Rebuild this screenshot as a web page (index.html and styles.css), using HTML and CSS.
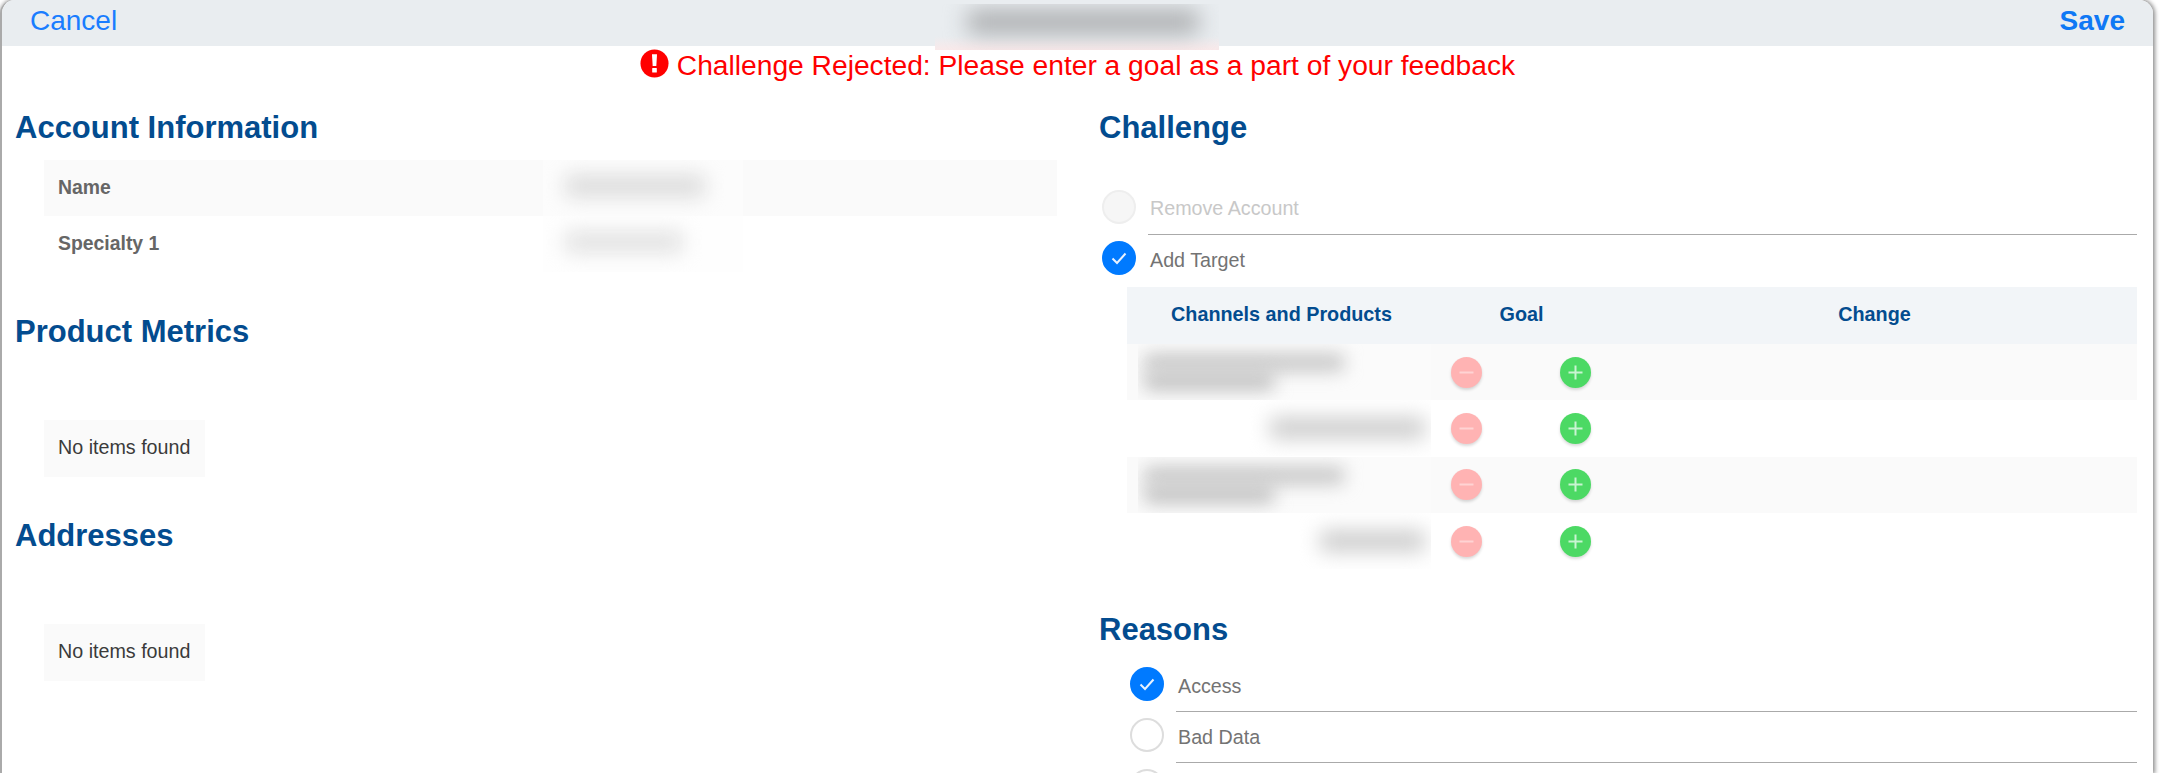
FILE: index.html
```html
<!DOCTYPE html>
<html lang="en">
<head>
  <meta charset="UTF-8" />
  <title>Challenge</title>
  <link rel="stylesheet" href="styles.css">
</head>
<body>
  <div class="modal">
    <div class="modal-header">
      <a class="header-link">Cancel</a>
      <div class="title-patch"><span class="title-smear"></span></div>
      <a class="header-link save">Save</a>
    </div>

    <div class="error-line">
      <svg class="error-icon" viewBox="0 0 30 30">
        <circle cx="15" cy="15" r="14.5" fill="#ff0000"/>
        <path d="M12.4 5.5h5.2l-.7 12h-3.8z" fill="#fff"/>
        <rect x="12.6" y="19.6" width="4.8" height="4.8" rx="0.6" fill="#fff"/>
      </svg>
      <span>Challenge Rejected: Please enter a goal as a part of your feedback</span>
    </div>

    <div class="columns">
      <div class="col">
        <h2 class="section-title">Account Information</h2>
        <table class="info-table">
          <tr class="shaded">
            <th>Name</th>
            <td><div class="smears info-smears"><span class="smear s-name"></span></div></td>
          </tr>
          <tr>
            <th>Specialty 1</th>
            <td><div class="smears info-smears pale"><span class="smear s-spec"></span></div></td>
          </tr>
        </table>

        <h2 class="section-title spaced">Product Metrics</h2>
        <div class="empty-box">No items found</div>

        <h2 class="section-title spaced-more">Addresses</h2>
        <div class="empty-box">No items found</div>
      </div>

      <div class="col">
        <h2 class="section-title">Challenge</h2>
        <div class="challenge-list">
          <div class="radio-row">
            <span class="radio disabled"></span>
            <span class="radio-label muted">Remove Account</span>
          </div>
          <div class="radio-row no-line">
            <span class="radio checked">
              <svg viewBox="0 0 34 34"><path d="M10.5 17.5l4.5 4.5 8.5-9.5" fill="none" stroke="#e8f2ff" stroke-width="2"/></svg>
            </span>
            <span class="radio-label">Add Target</span>
          </div>
        </div>

        <table class="goal-table">
          <thead>
            <tr>
              <th class="c-name">Channels and Products</th>
              <th class="c-goal">Goal</th>
              <th>Change</th>
            </tr>
          </thead>
          <tbody>
            <tr>
              <td class="name-cell"><div class="smears two-line"><span class="smear l1"></span><span class="smear l2"></span></div></td>
              <td><div class="goal-btns">
                <button class="round minus"><svg viewBox="0 0 31 31"><path d="M8.5 15.5h14" stroke="#ffd3d3" stroke-width="2"/></svg></button>
                <button class="round plus"><svg viewBox="0 0 31 31"><path d="M8.5 15.5h14M15.5 8.5v14" stroke="#c9f4d2" stroke-width="2"/></svg></button>
              </div></td>
              <td></td>
            </tr>
            <tr>
              <td class="name-cell"><div class="smears one-line"><span class="smear r-long"></span></div></td>
              <td><div class="goal-btns">
                <button class="round minus"><svg viewBox="0 0 31 31"><path d="M8.5 15.5h14" stroke="#ffd3d3" stroke-width="2"/></svg></button>
                <button class="round plus"><svg viewBox="0 0 31 31"><path d="M8.5 15.5h14M15.5 8.5v14" stroke="#c9f4d2" stroke-width="2"/></svg></button>
              </div></td>
              <td></td>
            </tr>
            <tr>
              <td class="name-cell"><div class="smears two-line"><span class="smear l1"></span><span class="smear l2"></span></div></td>
              <td><div class="goal-btns">
                <button class="round minus"><svg viewBox="0 0 31 31"><path d="M8.5 15.5h14" stroke="#ffd3d3" stroke-width="2"/></svg></button>
                <button class="round plus"><svg viewBox="0 0 31 31"><path d="M8.5 15.5h14M15.5 8.5v14" stroke="#c9f4d2" stroke-width="2"/></svg></button>
              </div></td>
              <td></td>
            </tr>
            <tr>
              <td class="name-cell"><div class="smears one-line"><span class="smear r-short"></span></div></td>
              <td><div class="goal-btns">
                <button class="round minus"><svg viewBox="0 0 31 31"><path d="M8.5 15.5h14" stroke="#ffd3d3" stroke-width="2"/></svg></button>
                <button class="round plus"><svg viewBox="0 0 31 31"><path d="M8.5 15.5h14M15.5 8.5v14" stroke="#c9f4d2" stroke-width="2"/></svg></button>
              </div></td>
              <td></td>
            </tr>
          </tbody>
        </table>

        <h2 class="section-title reasons-title">Reasons</h2>
        <div class="reason-list">
          <div class="radio-row">
            <span class="radio checked">
              <svg viewBox="0 0 34 34"><path d="M10.5 17.5l4.5 4.5 8.5-9.5" fill="none" stroke="#e8f2ff" stroke-width="2"/></svg>
            </span>
            <span class="radio-label">Access</span>
          </div>
          <div class="radio-row">
            <span class="radio"></span>
            <span class="radio-label">Bad Data</span>
          </div>
          <div class="radio-row">
            <span class="radio"></span>
            <span class="radio-label">&nbsp;</span>
          </div>
        </div>
      </div>
    </div>
  </div>
</body>
</html>
```

FILE: styles.css
```css
html, body {
  margin: 0;
  height: 773px;
  overflow: hidden;
  background: #fff;
}
body {
  font-family: "Liberation Sans", Arial, sans-serif;
  font-size: 19.7px;
  color: #666;
}
.modal {
  position: relative;
  width: 2153px;
  height: 773px;
  box-sizing: border-box;
  overflow: hidden;
  border-left: 2px solid #aaa;
  border-radius: 14px 14px 0 0;
  box-shadow: 1px 0 4px 1px rgba(0,0,0,0.45);
  background: #fff;
}
.modal-header {
  display: flex;
  justify-content: space-between;
  align-items: center;
  height: 46px;
  margin-left: -2px;
  padding: 0 28px 5px 30px;
  box-sizing: border-box;
  background: #e9edf0;
}
.header-link {
  font-size: 28px;
  color: #1a7dff;
}
.header-link.save {
  font-weight: bold;
  color: #0f78f5;
}
.title-patch {
  position: absolute;
  top: 4px;
  left: 50%;
  margin-left: -143px;
  width: 284px;
  height: 46px;
  overflow: hidden;
  background: linear-gradient(to bottom, #e9edf0 70%, #f9e9ea 100%);
}
.title-smear {
  display: block;
  width: 232px;
  height: 24px;
  margin: 6px 0 0 32px;
  background: #adafb1;
  border-radius: 6px;
  filter: blur(11px);
}
.error-line {
  display: flex;
  justify-content: center;
  align-items: center;
  gap: 8px;
  height: 38px;
  padding-bottom: 2px;
  font-size: 28.2px;
  color: #f00;
}
.error-icon {
  width: 29px;
  height: 29px;
  flex: none;
  margin-top: -4px;
}
.columns {
  display: grid;
  grid-template-columns: 1084px 1fr;
  padding-top: 15px;
}
.col {
  padding-left: 13px;
  padding-right: 14px;
}
.col + .col {
  padding-right: 16px;
}
.section-title {
  margin: 0;
  height: 54px;
  line-height: 54px;
  font-size: 31px;
  font-weight: bold;
  color: #034c8f;
}
.section-title.spaced { margin-top: 33px; }
.section-title.spaced-more { margin-top: 32px; }
.info-table {
  width: 1013px;
  margin: 5px 0 0 29px;
  border-collapse: collapse;
  table-layout: fixed;
}
.info-table tr { height: 56px; }
.info-table th {
  width: 499px;
  padding: 0 0 2px 14px;
  box-sizing: border-box;
  text-align: left;
  font-size: 19.4px;
  color: #666;
}
.info-table td { padding: 0; }
.shaded { background: #fafafa; }
.smears {
  display: flex;
  flex-direction: column;
  justify-content: center;
  height: 56px;
  overflow: hidden;
}
.info-smears {
  width: 200px;
  background: #fcfcfc;
}
.info-smears.pale { background: #fefefe; }
.smear {
  display: block;
  background: #ddd;
  border-radius: 4px;
  filter: blur(10px);
}
.s-name { width: 140px; height: 22px; margin: 0 0 4px 22px; background: #dcdcdc; }
.s-spec { width: 118px; height: 22px; margin: 0 0 4px 22px; background: #e2e2e2; }
.empty-box {
  display: inline-block;
  margin: 61px 0 0 29px;
  padding: 0 15px 0 14px;
  height: 57px;
  line-height: 55px;
  background: #fafafa;
  color: #3a3a3a;
}
.radio-row {
  display: flex;
  gap: 12px;
  height: 51px;
  box-sizing: border-box;
  padding-top: 7px;
}
.radio {
  flex: none;
  width: 34px;
  height: 34px;
  box-sizing: border-box;
  border: 2px solid #ddd;
  border-radius: 50%;
  background: #fff;
}
.radio svg {
  display: block;
  margin: -2px;
  width: 34px;
  height: 34px;
}
.radio.disabled {
  background: #f6f6f6;
  border-color: #eee;
}
.radio.checked {
  background: #007aff;
  border-color: #007aff;
}
.radio-label {
  flex: 1;
  padding: 7px 0 0 2px;
  margin-bottom: -0.5px;
  line-height: 24px;
  border-bottom: 1.5px solid #aaa;
  color: #737373;
}
.radio-label.muted {
  padding-top: 6px;
  color: #c8c8c8;
}
.no-line .radio-label { border-bottom: 0; }
.challenge-list {
  margin: 28px 0 0 3px;
}
.goal-table {
  width: 1010px;
  margin: 2px 0 0 28px;
  border-collapse: collapse;
  table-layout: fixed;
}
.goal-table th {
  height: 57px;
  padding: 0 0 3px;
  box-sizing: border-box;
  background: #f2f5f8;
  font-size: 19.8px;
  color: #034c8f;
}
.goal-table th.c-name {
  width: 304px;
  padding-left: 5px;
}
.c-goal { width: 181px; }
.goal-table td { padding: 0; height: 56.33px; }
.goal-table tbody tr:nth-child(odd) { background: #fafafa; }
.name-cell { padding-left: 11px !important; }
.two-line {
  gap: 2px;
  align-items: flex-start;
  background: #fbfbfb;
}
.one-line {
  align-items: flex-end;
  background: #fff;
}
.l1 { width: 200px; height: 17px; margin-left: 6px; background: #c4c4c4; }
.l2 { width: 130px; height: 17px; margin-left: 6px; background: #bebebe; }
.r-long { width: 155px; height: 22px; margin-right: 6px; background: #cecece; }
.r-short { width: 105px; height: 22px; margin-right: 6px; background: #cecece; }
.two-line .smear { filter: blur(9px); }
.goal-btns {
  display: flex;
  gap: 78px;
  padding-left: 20px;
}
.round {
  width: 31px;
  height: 31px;
  padding: 0;
  border: 0;
  border-radius: 50%;
  box-shadow: 0 2px 3px rgba(0,0,0,0.15);
}
.round svg { display: block; }
.minus { background: #ffb3b3; }
.plus { background: #4cd964; }
.reasons-title { margin-top: 34px; }
.reason-list {
  margin: 3px 0 0 31px;
}
```
